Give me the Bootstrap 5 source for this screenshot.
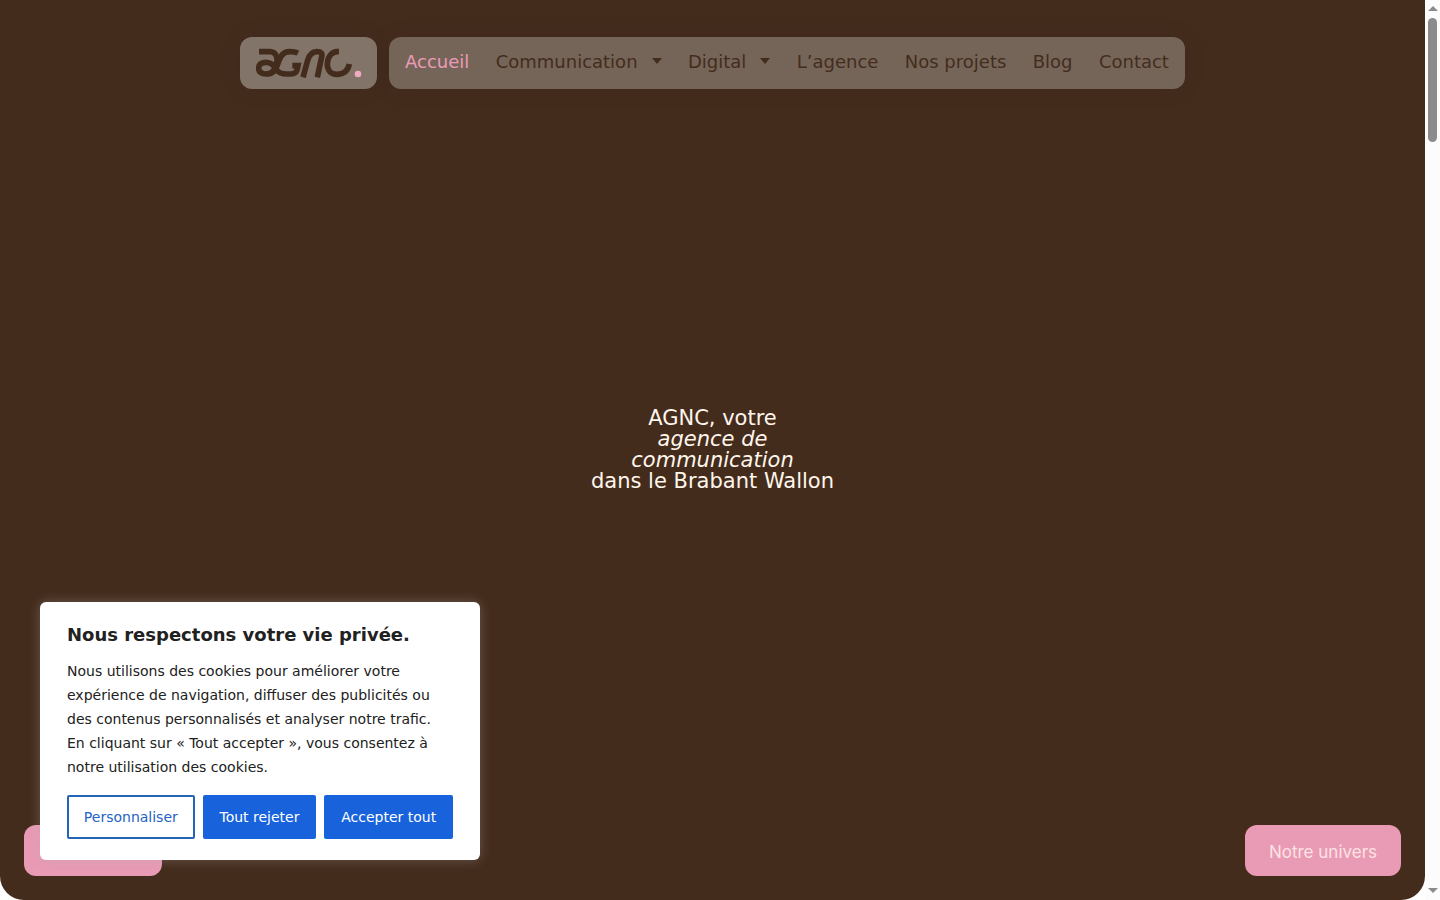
<!DOCTYPE html>
<html lang="fr">
<head>
<meta charset="utf-8">
<meta name="viewport" content="width=device-width, initial-scale=1">
<title>AGNC – Agence de communication</title>
<link href="https://cdn.jsdelivr.net/npm/bootstrap@5.3.0/dist/css/bootstrap.min.css" rel="stylesheet">
<style>
:root{--brown:#442c1d;--pink:#e99ab4}
body{background:#fff;font-family:Inter,"DejaVu Sans",sans-serif;color:var(--brown)}
.hero{background:var(--brown);border-radius:0 0 24px 24px;min-width:0}
.site-head{margin-top:37px;gap:12px}
.logo-tile,.menu-tile{height:52px;border-radius:12px;box-shadow:0 0 24px rgba(0,0,0,.08)}
.logo-tile{background:#827469;padding:0 15px 0 16px}
.menu-tile{background:#756558;padding:0 16px 2px;width:796px;font:18px/24px "DejaVu Sans",sans-serif}
.menu-tile a{color:var(--brown);text-decoration:none;white-space:nowrap}
.menu-tile a.active{color:#eb9bb8}
.menu-tile svg{margin:0 0 4px 14px}
.hero-title{font:21px/21px "DejaVu Sans",sans-serif;color:#fff6ec}
.intro{padding-bottom:14px}
.pill{height:51px;min-width:138px;border:0;border-radius:12px;background:var(--pink);color:#fde3e4;font-size:17px;padding:4px 24px 0}
.consent{left:40px;bottom:40px;width:440px;padding:21px 27px;border-radius:6px;box-shadow:0 0 12px rgba(172,171,171,.35);font:14px/24px "DejaVu Sans",sans-serif;color:#212121}
.consent h2{font-size:18px;line-height:24px;margin-bottom:12px}
.consent p{margin-bottom:16px}
.choice{height:44px;border:2px solid #1863dc;border-radius:2px;background:#1863dc;color:#fff;white-space:nowrap;padding:0 14px}
.choice.hollow{background:#fff;color:#2463c4;border-color:#2565b8}
.scroll-rail{width:15px;background:#fcfcfc;padding:6px 0}
.thumb{width:9px;height:124px;border-radius:5px;background:#8b8b8b;margin-top:6px}
</style>
</head>
<body>
<div class="d-flex vh-100 overflow-hidden">
  <main class="hero position-relative flex-grow-1 d-flex flex-column">
    <header class="site-head d-flex justify-content-center">
      <a class="logo-tile d-flex align-items-center" href="#" aria-label="agnc">
        <svg width="106" height="30" viewBox="78 69 318 90" fill="none" stroke="#442c1d" stroke-width="17">
          <path d="M87 80H118C135 80 142 91 141 108C140 134 129 147 108 147C93 147 86 140 86 130C86 118 95 112 108 112C126 112 132 124 141 136C148 145 158 147 170 147H183C195 147 200 141 202 132L204 122H187"/>
          <path d="M204 84C195 80 188 80 180 80C156 80 150 98 145 112C141 126 136 134 130 140"/>
          <path d="M219 157L233 106C238 88 248 80 261 80C273 80 278 85 275 96L262 157"/>
          <path d="M327 80H322C304 80 292 97 292 118C292 137 304 148 320 148C341 148 354 137 358 117"/>
          <circle cx="384" cy="147" r="10" fill="#f3a9c2" stroke="none"/>
        </svg>
      </a>
      <nav class="menu-tile d-flex align-items-center justify-content-between">
        <a class="active" href="#">Accueil</a>
        <a href="#">Communication<svg width="10" height="6" viewBox="0 0 10 6"><path d="M0 0H10L5 6Z" fill="#442c1d"/></svg></a>
        <a href="#">Digital<svg width="10" height="6" viewBox="0 0 10 6"><path d="M0 0H10L5 6Z" fill="#442c1d"/></svg></a>
        <a href="#">L’agence</a>
        <a href="#">Nos projets</a>
        <a href="#">Blog</a>
        <a href="#">Contact</a>
      </nav>
    </header>
    <div class="intro flex-grow-1 d-flex align-items-center justify-content-center">
      <h1 class="hero-title text-center m-0">AGNC, votre<br><em>agence de<br>communication</em><br>dans le Brabant Wallon</h1>
    </div>
    <div class="d-flex justify-content-between px-4 pb-4">
      <button class="pill" type="button" aria-label="Contact"></button>
      <button class="pill" type="button">Notre univers</button>
    </div>
    <section class="consent position-absolute bg-white" aria-label="Cookies">
      <h2 class="fw-bold">Nous respectons votre vie privée.</h2>
      <p>Nous utilisons des cookies pour améliorer votre expérience de navigation, diffuser des publicités ou des contenus personnalisés et analyser notre trafic. En cliquant sur « Tout accepter », vous consentez à notre utilisation des cookies.</p>
      <div class="d-flex gap-2">
        <button class="choice hollow flex-grow-1" type="button">Personnaliser</button>
        <button class="choice flex-grow-1" type="button">Tout rejeter</button>
        <button class="choice flex-grow-1" type="button">Accepter tout</button>
      </div>
    </section>
  </main>
  <div class="scroll-rail d-flex flex-column align-items-center" aria-hidden="true">
    <svg width="10" height="6" viewBox="0 0 10 6"><path d="M0 5L5 0L10 5Z" fill="#8b8b8b"/></svg>
    <div class="thumb"></div>
    <svg class="mt-auto" width="10" height="6" viewBox="0 0 10 6"><path d="M0 0H10L5 5Z" fill="#8b8b8b"/></svg>
  </div>
</div>
<script src="https://cdn.jsdelivr.net/npm/bootstrap@5.3.0/dist/js/bootstrap.bundle.min.js"></script>
</body>
</html>
